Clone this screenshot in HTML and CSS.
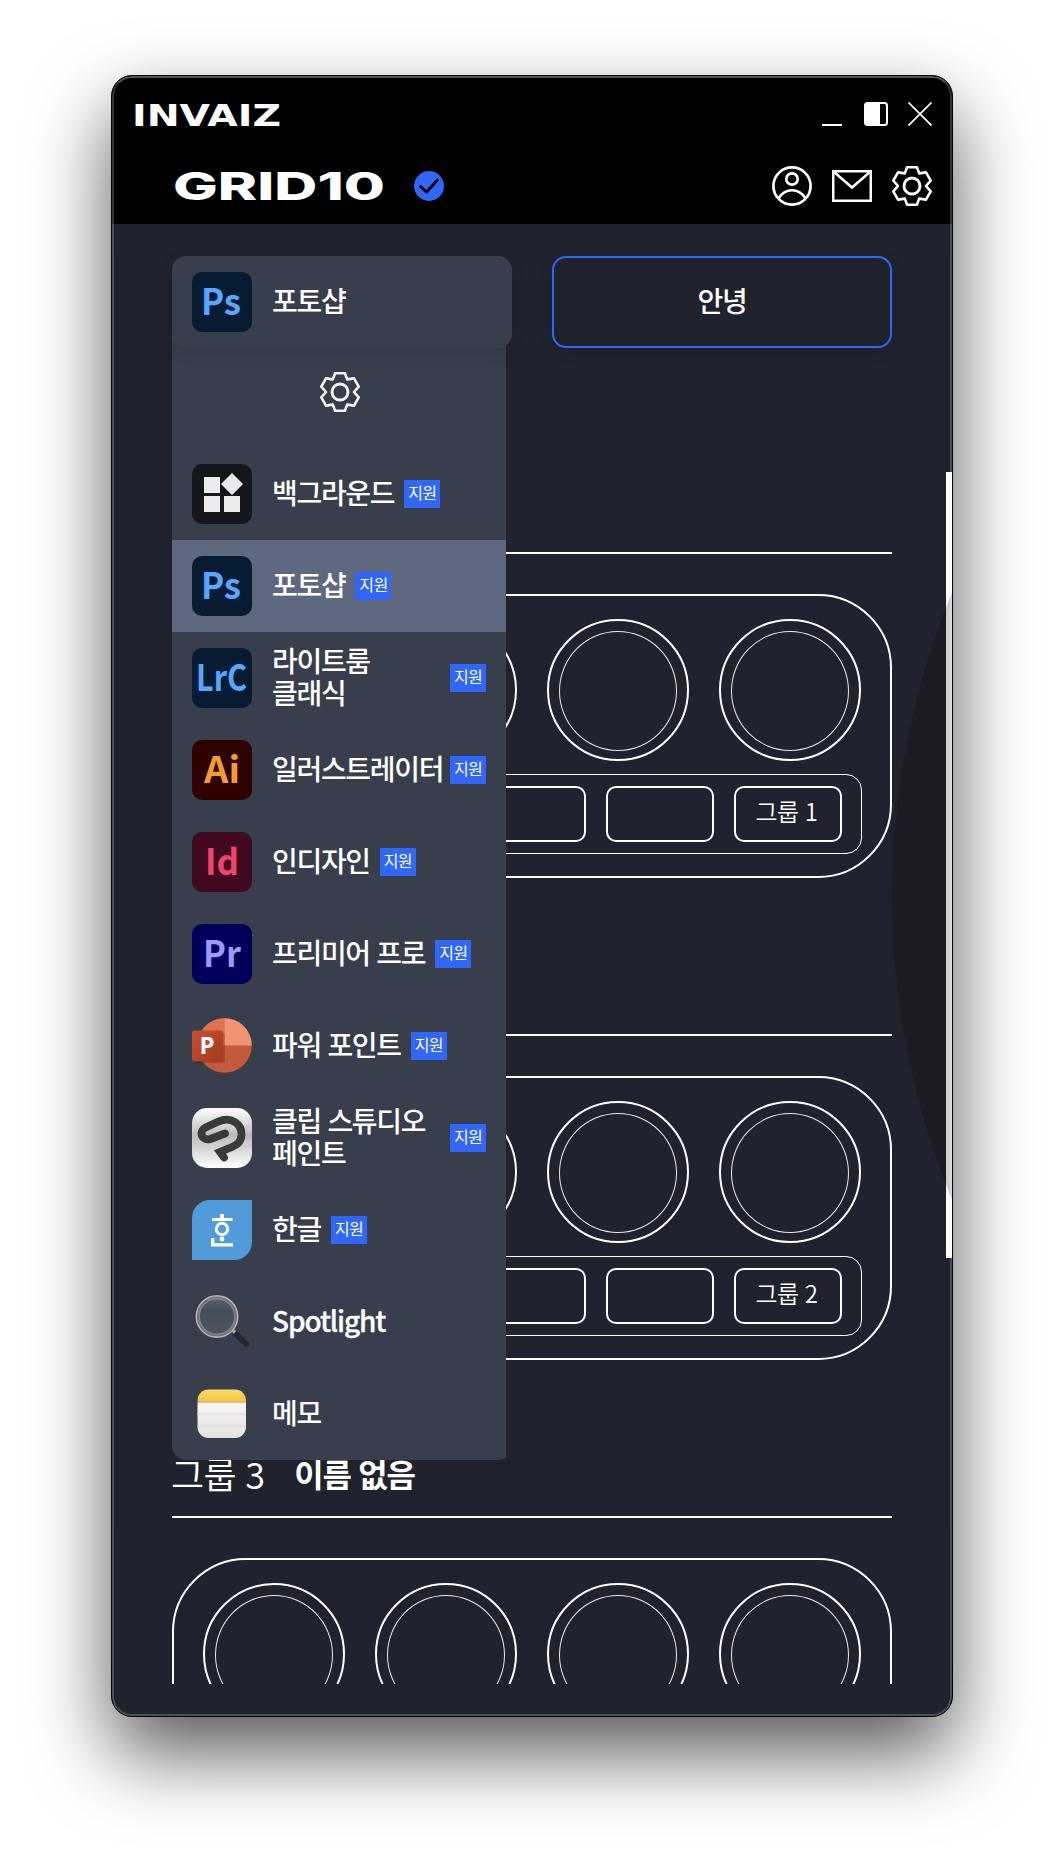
FILE: index.html
```html
<!DOCTYPE html>
<html lang="ko">
<head>
<meta charset="utf-8">
<title>INVAIZ GRID10</title>
<link rel="stylesheet" href="styles.css">
</head>
<body>
<svg width="0" height="0" class="defs">
  <symbol id="gear" viewBox="-20 -20 40 40">
    <path d="M-4.9-18.700H4.900L7.200-12.600L14-13.600L18.700-5.300L14 0L18.700 5.300L14 13.600L7.200 12.600L4.900 18.700H-4.900L-7.200 12.600L-14 13.600L-18.700 5.300L-14 0L-18.700-5.300L-14-13.600L-7.200-12.600Z" fill="none" stroke="currentColor" stroke-width="2.600" stroke-linejoin="round"/>
    <circle r="8" fill="none" stroke="currentColor" stroke-width="2.900"/>
  </symbol>
  <symbol id="ps" viewBox="0 0 60 60">
    <rect width="60" height="60" rx="10" fill="#071c33"/>
    <text class="adobe" x="9" y="43" textLength="40" lengthAdjust="spacingAndGlyphs" fill="#57a7ff">Ps</text>
  </symbol>
</svg>

<div class="window">
  <header class="header">
    <div class="titlebar">
      <svg class="brand" width="150" height="24" viewBox="0 0 150 24"><text class="wordmark invaiz" x="-1" y="24" font-size="30.2" textLength="149" lengthAdjust="spacingAndGlyphs">INVAIZ</text></svg>
      <div class="controls">
        <svg width="20" height="24" viewBox="0 0 20 24"><path d="M0 23H20" stroke="#fff" stroke-width="2"/></svg>
        <svg class="dock" width="24" height="24" viewBox="0 0 24 24"><rect x="1" y="1" width="22" height="22" rx="2.5" fill="none" stroke="#fff" stroke-width="2"/><path d="M1 2H16V22H1Z" fill="#fff"/></svg>
        <svg width="24" height="24" viewBox="0 0 24 24"><path d="M.5.5L23.5 23.5M23.5.5L.5 23.5" stroke="#fff" stroke-width="1.7"/></svg>
      </div>
    </div>
    <div class="devicebar">
      <svg class="brand" width="212" height="30" viewBox="0 0 212 30"><text class="wordmark grid10" y="29" x="-1" font-size="38.5" textLength="212" lengthAdjust="spacingAndGlyphs">GRID10</text></svg>
      <svg class="verified" width="30" height="30" viewBox="0 0 30 30"><circle cx="15" cy="15" r="15" fill="#3067f9"/><path d="M6.5 15.5L12.5 21L23.5 9" fill="none" stroke="#000" stroke-width="2.8" stroke-linecap="round" stroke-linejoin="round"/></svg>
      <div class="tools">
        <svg width="40" height="40" viewBox="-20 -20 40 40" fill="none" stroke="#fff" stroke-width="2.700"><circle r="18.600"/><circle cy="-7" r="5.700"/><path d="M-13.500 12.500C-7 1.500 7 1.500 13.500 12.500"/></svg>
        <svg width="40" height="32" viewBox="0 0 40 32" fill="none" stroke="#fff" stroke-width="2.500"><path d="M1.250 1.250H38.750V30.750H1.250ZM1.500 1.500L20 17.500L38.500 1.500"/></svg>
        <svg width="40" height="40"><use href="#gear"/></svg>
      </div>
    </div>
  </header>

  <main class="main">
    <div class="pickers">
      <div class="picker">
        <div class="select">
          <svg class="icon"><use href="#ps"/></svg>
          <span class="name">포토샵</span>
        </div>
        <div class="dropdown">
          <div class="panel">
            <div class="manage"><svg width="40" height="40"><use href="#gear"/></svg></div>
            <div class="item">
              <svg class="icon" viewBox="0 0 60 60"><rect width="60" height="60" rx="10" fill="#14171b"/><path d="M12 13H28V29H12ZM12 32H28V48H12ZM32 32H48V48H32ZM40 9L51 20L40 31L29 20Z" fill="#ebebeb"/></svg>
              <span class="name">백그라운드</span><span class="badge">지원</span>
            </div>
            <div class="item active">
              <svg class="icon"><use href="#ps"/></svg>
              <span class="name">포토샵</span><span class="badge">지원</span>
            </div>
            <div class="item">
              <svg class="icon" viewBox="0 0 60 60"><rect width="60" height="60" rx="10" fill="#071c33"/><text class="adobe" x="4" y="43" textLength="51" lengthAdjust="spacingAndGlyphs" fill="#57a7ff">LrC</text></svg>
              <span class="name wide">라이트룸<br>클래식</span><span class="badge">지원</span>
            </div>
            <div class="item">
              <svg class="icon" viewBox="0 0 60 60"><rect width="60" height="60" rx="10" fill="#2e0200"/><text class="adobe" x="12" y="43" textLength="36" lengthAdjust="spacingAndGlyphs" fill="#f59b33">Ai</text></svg>
              <span class="name wide">일러스트레이터</span><span class="badge">지원</span>
            </div>
            <div class="item">
              <svg class="icon" viewBox="0 0 60 60"><rect width="60" height="60" rx="10" fill="#410a20"/><text class="adobe" x="13" y="43" textLength="34" lengthAdjust="spacingAndGlyphs" fill="#ee456c">Id</text></svg>
              <span class="name">인디자인</span><span class="badge">지원</span>
            </div>
            <div class="item">
              <svg class="icon" viewBox="0 0 60 60"><rect width="60" height="60" rx="10" fill="#00005b"/><text class="adobe" x="11" y="43" textLength="38" lengthAdjust="spacingAndGlyphs" fill="#9b98ff">Pr</text></svg>
              <span class="name">프리미어 프로</span><span class="badge">지원</span>
            </div>
            <div class="item">
              <svg class="icon" viewBox="0 0 60 60">
                <defs><linearGradient id="pp" x1="0" y1="0" x2="1" y2="1"><stop offset="0" stop-color="#c65233"/><stop offset="1" stop-color="#a5391e"/></linearGradient></defs>
                <circle cx="32.500" cy="29.500" r="27.300" fill="#c35a39"/><path d="M32.500 2.200A27.300 27.300 0 0 0 5.200 29.500H32.500Z" fill="#de7354"/><path d="M32.500 2.200A27.300 27.300 0 0 1 59.800 29.500H32.500Z" fill="#f09474"/>
                <rect x="3" y="17" width="30" height="30" rx="2" fill="#000" opacity=".18"/><rect y="14.500" width="31" height="31" rx="2.500" fill="url(#pp)"/><text class="pp" x="7.500" y="38">P</text>
              </svg>
              <span class="name">파워 포인트</span><span class="badge">지원</span>
            </div>
            <div class="item">
              <svg class="icon" viewBox="0 0 60 60">
                <defs><linearGradient id="csp" x1="0" y1="0" x2="0" y2="1"><stop offset="0" stop-color="#fff"/><stop offset=".45" stop-color="#bcbcbc"/><stop offset=".65" stop-color="#d2d2d2"/><stop offset="1" stop-color="#fff"/></linearGradient></defs>
                <rect width="60" height="60" rx="15" fill="url(#csp)"/><path d="M33 25.500L18.500 31C9.500 33.500 6 23 13.500 19.500L26.500 13.500C39 8 50 16 49.500 27C49 34 45.500 36.500 40 39L28 44L32 49.500" fill="none" stroke="#3a3a3a" stroke-width="7.800" stroke-linecap="round"/>
              </svg>
              <span class="name wide">클립 스튜디오<br>페인트</span><span class="badge">지원</span>
            </div>
            <div class="item">
              <svg class="icon" viewBox="0 0 60 60"><path d="M18 0H60V42A18 18 0 0 1 42 60H0V18A18 18 0 0 1 18 0Z" fill="#519bda"/><g fill="#fff"><rect x="28" y="14" width="4" height="5"/><rect x="20" y="18" width="20.500" height="3"/><circle cx="30" cy="29" r="5.700" fill="none" stroke="#fff" stroke-width="3"/><circle cx="30" cy="39" r="2.400"/><path d="M19 38H22.300V43.200H41V46.500H19Z"/></g></svg>
              <span class="name">한글</span><span class="badge">지원</span>
            </div>
            <div class="item">
              <svg class="icon" viewBox="0 0 60 60">
                <defs><linearGradient id="lens" x1="0" y1="0" x2="0" y2="1"><stop offset="0" stop-color="#5b6473"/><stop offset=".35" stop-color="#444d59"/><stop offset="1" stop-color="#50565e"/></linearGradient></defs>
                <path d="M43 41L54 52" stroke="#25272a" stroke-width="5.500" stroke-linecap="round"/><path d="M39.500 37L43 40.500" stroke="#a5a8aa" stroke-width="3.500"/><circle cx="25" cy="24.500" r="19.500" fill="url(#lens)" stroke="#747676" stroke-width="4"/><circle cx="25" cy="24.500" r="20.700" fill="none" stroke="#bebfbf" stroke-width="1.200"/><circle cx="25" cy="24.500" r="17.600" fill="none" stroke="#92979b" stroke-width=".8"/>
              </svg>
              <span class="name latin">Spotlight</span>
            </div>
            <div class="item">
              <svg class="icon" viewBox="0 0 60 60">
                <defs><linearGradient id="memo" x1="0" y1="0" x2="0" y2="1"><stop offset="0" stop-color="#fadb6b"/><stop offset=".24" stop-color="#f4c73f"/><stop offset=".26" stop-color="#b8a77d"/><stop offset=".28" stop-color="#f7f6f5"/><stop offset="1" stop-color="#e3e2df"/></linearGradient></defs>
                <rect x="5.500" y="5.500" width="48.500" height="48.500" rx="11" fill="url(#memo)"/><path d="M5.500 30H54M5.500 42H54" stroke="#dedddb" stroke-width="1.300"/>
              </svg>
              <span class="name">메모</span>
            </div>
          </div>
        </div>
      </div>
      <div class="profile"><span class="name">안녕</span></div>
    </div>

    <div class="groups">
      <section class="group">
        <h2 class="head"><span>그룹 1</span><b>이름 없음</b></h2>
        <div class="board">
          <div class="dials"><i class="dial"></i><i class="dial"></i><i class="dial"></i><i class="dial"></i></div>
          <div class="keys"><i class="key"></i><i class="key"></i><i class="key"></i><i class="key"></i><span class="key">그룹 1</span></div>
        </div>
      </section>
      <section class="group">
        <h2 class="head"><span>그룹 2</span><b>이름 없음</b></h2>
        <div class="board">
          <div class="dials"><i class="dial"></i><i class="dial"></i><i class="dial"></i><i class="dial"></i></div>
          <div class="keys"><i class="key"></i><i class="key"></i><i class="key"></i><i class="key"></i><span class="key">그룹 2</span></div>
        </div>
      </section>
      <section class="group">
        <h2 class="head"><span>그룹 3</span><b>이름 없음</b></h2>
        <div class="board">
          <div class="dials"><i class="dial"></i><i class="dial"></i><i class="dial"></i><i class="dial"></i></div>
        </div>
      </section>
    </div>
  </main>
  <div class="scrollbar"></div>
  <div class="halo"></div>
</div>
</body>
</html>
```
FILE: styles.css
```css
* { box-sizing: border-box; }

body {
  margin: 0;
  height: 1864px;
  padding: 75px 111px;
  background: #fff;
  color: #fff;
  font-family: "Noto Sans CJK KR", sans-serif;
  overflow: hidden;
}

svg { display: block; flex: none; }
.defs { position: absolute; }
.brand { overflow: visible; }

.window {
  position: relative;
  width: 842px;
  height: 1642px;
  border: 1px solid #000;
  border-radius: 21px;
  background: #20222d;
  overflow: hidden;
  box-shadow: 0 36px 80px rgba(0, 0, 0, .66);
}

/* thin highlight along the window edge */
.window::after {
  content: "";
  position: absolute;
  inset: 0;
  border: 2px solid rgba(255, 255, 255, .2);
  border-top-color: rgba(255, 255, 255, .32);
  border-radius: 20px;
}

.header { height: 148px; background: #000; }

.titlebar {
  display: flex;
  justify-content: space-between;
  height: 74px;
  padding: 26px 20px 0 21px;
}

.controls { display: flex; }
.dock { margin: 0 20px 0 22px; }

.devicebar {
  display: flex;
  align-items: center;
  height: 74px;
  padding: 0 20px 2px 62px;
}

.verified { margin-left: 28px; }
.tools { display: flex; align-items: center; gap: 20px; margin-left: auto; }

.wordmark { fill: #fff; }
.invaiz { font-family: "DejaVu Sans", sans-serif; font-weight: 700; }
.grid10 { font-family: Inter, sans-serif; font-weight: 800; }

.main {
  display: flex;
  flex-direction: column;
  height: 1492px;
  padding: 32px 60px;
}

.pickers { display: flex; gap: 40px; }
.picker { position: relative; width: 340px; }

.select {
  position: relative;
  z-index: 3;
  display: flex;
  align-items: center;
  gap: 20px;
  height: 92px;
  padding: 0 20px;
  border-radius: 14px;
  background: #383e4b;
  box-shadow: 0 4px 16px rgba(0, 0, 0, .1);
}

.profile {
  display: flex;
  align-items: center;
  justify-content: center;
  width: 340px;
  height: 92px;
  border: 2px solid #3067f9;
  border-radius: 14px;
  box-shadow: 0 4px 16px rgba(0, 0, 0, .1);
}

.dropdown {
  position: absolute;
  z-index: 2;
  top: 46px;
  left: 0;
  width: 334px;
  overflow: hidden;
}

.panel {
  width: 340px;
  padding-top: 46px;
  border-radius: 0 0 14px 14px;
  background: #383e4b;
}

.manage {
  display: flex;
  justify-content: center;
  height: 100px;
  padding: 24px 4px 0 0;
  color: #f5f5f5;
}

.item {
  display: flex;
  align-items: center;
  height: 92px;
  padding: 0 26px 0 20px;
}

.item .icon { margin-right: 20px; }
.item.active { background: #5e6980; }
.icon { width: 60px; height: 60px; }

.name {
  padding-bottom: 4px;
  font-size: 28px;
  font-weight: 500;
  line-height: 32px;
  letter-spacing: -0.047em;
  white-space: nowrap;
}

.name.wide { flex: 1; }
.name.latin { font-weight: 450; letter-spacing: -0.04em; -webkit-text-stroke: .3px #fff; }

.badge {
  width: 36px;
  height: 28px;
  margin-left: 10px;
  padding-left: 4px;
  background: #3067f9;
  font-size: 16px;
  line-height: 25px;
  letter-spacing: -0.04em;
  white-space: nowrap;
}

.name.wide + .badge { margin-left: 0; }

.adobe { font: 700 36.5px "Noto Sans CJK KR", sans-serif; }
.pp { font: 700 24px "Open Sans", sans-serif; fill: #fff; }

.groups {
  flex: 1;
  min-height: 0;
  padding-top: 132px;
  overflow: hidden;
}

.group { height: 482px; }

.head {
  display: flex;
  align-items: center;
  gap: 31px;
  height: 74px;
  margin: 0 0 40px;
  padding-bottom: 14px;
  border-bottom: 2px solid #fff;
  font-size: 36px;
  font-weight: 350;
  line-height: 40px;
  letter-spacing: -0.02em;
  text-indent: -1px;
}

.head b { font-size: 32px; font-weight: 700; letter-spacing: -0.04em; }

.board {
  height: 284px;
  padding: 23px 28px;
  border: 2px solid #fff;
  border-radius: 74px;
}

.dials { display: flex; gap: 30px; padding-left: 1px; }

.dial {
  width: 142px;
  height: 142px;
  padding: 10px;
  border: 2px solid #fff;
  border-radius: 50%;
}

.dial::before {
  content: "";
  display: block;
  height: 118px;
  border: 1px solid rgba(255, 255, 255, .9);
  border-radius: 50%;
}

.keys {
  display: flex;
  gap: 20px;
  width: 660px;
  height: 80px;
  margin-top: 13px;
  padding: 11px 19px;
  border: 1px solid #fff;
  border-radius: 16px;
}

.key {
  width: 108px;
  height: 56px;
  padding-right: 3px;
  border: 2px solid #fff;
  border-radius: 10px;
  font-size: 24px;
  font-weight: 350;
  line-height: 46px;
  letter-spacing: -0.02em;
  text-align: center;
}

.scrollbar {
  position: absolute;
  top: 396px;
  right: 0;
  width: 6px;
  height: 786px;
  background: #fff;
}

/* large translucent disc that peeks in from the right edge */
.halo {
  position: absolute;
  top: 20px;
  left: 780px;
  width: 1600px;
  height: 1600px;
  border-radius: 50%;
  background: rgba(5, 0, 0, .19);
}
```
